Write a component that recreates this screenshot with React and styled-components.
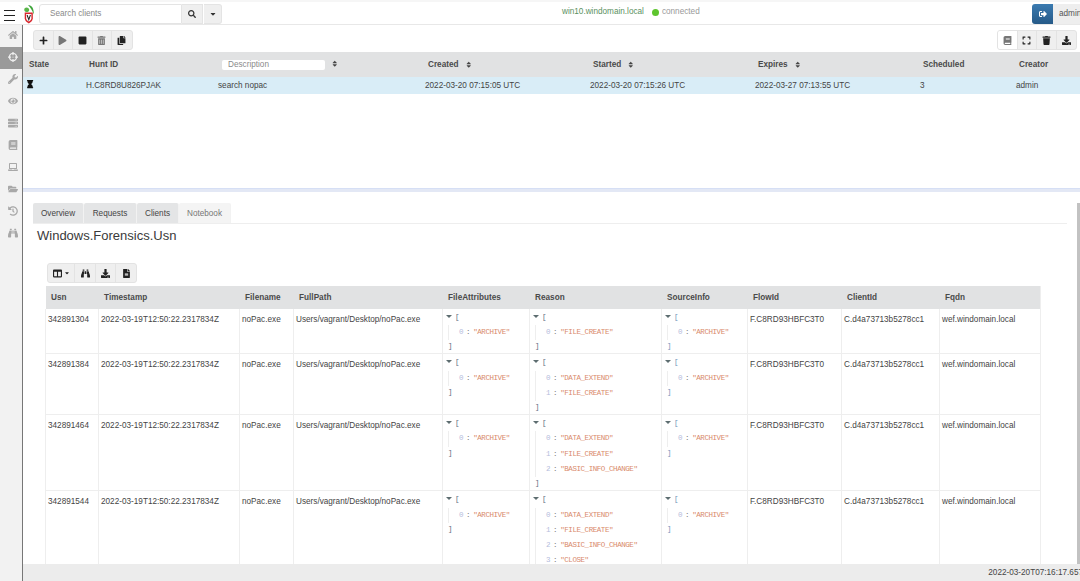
import React from 'react';
import styled, { createGlobalStyle } from 'styled-components';
import {
	FaHome, FaCrosshairs, FaWrench, FaEye, FaServer, FaBook, FaLaptop, FaFolderOpen,
	FaHistory, FaBinoculars, FaPlus, FaPlay, FaStop, FaTrashAlt, FaCopy, FaHourglass,
	FaSearch, FaCaretDown, FaSignOutAlt, FaExpand, FaTrash, FaDownload, FaColumns,
	FaFileAlt, FaSort,
} from 'react-icons/fa';

const GlobalStyle = createGlobalStyle`
	html, body {
		margin: 0;
		padding: 0;
		background: #fff;
		overflow: hidden;
	}
	* {
		box-sizing: border-box;
	}
`;

const Page = styled.div`
	position: relative;
	width: 1080px;
	height: 581px;
	overflow: hidden;
	display: flex;
	flex-direction: column;
	font-family: 'Liberation Sans', Arial, sans-serif;
	font-size: 8.2px;
	color: #333;
`;

const TopBar = styled.div`
	flex: 0 0 25px;
	display: flex;
	align-items: center;
	border-top: 2px solid #f6f6f6;
	border-bottom: 1px solid #e8e8e8;
	position: relative;
	background: #fff;
`;

const Burger = styled.div`
	width: 11px;
	height: 11px;
	margin: 5px 8px 0 4px;
	display: flex;
	flex-direction: column;
	justify-content: space-between;
	span {
		display: block;
		height: 1px;
		background: #222;
	}
`;

const LogoMark = styled.svg`
	flex: none;
	margin-top: 2px;
`;

const SearchGroup = styled.div`
	display: flex;
	height: 20px;
	margin: 1px 0 0 4px;
`;

const SearchInput = styled.div`
	width: 143px;
	border: 1px solid #e4e4e4;
	border-radius: 3px 0 0 3px;
	padding: 0 10px;
	line-height: 18px;
	color: #8a8a8a;
	font-size: 8.2px;
`;

const SearchBtn = styled.div`
	width: ${({ w }) => w}px;
	display: flex;
	align-items: center;
	justify-content: center;
	background: #efefef;
	border: 1px solid #e4e4e4;
	border-left: 0;
	color: #333;
	font-size: 8px;
	&:last-child {
		margin-left: 1px;
		border-radius: 0 3px 3px 0;
	}
`;

const Connection = styled.div`
	position: absolute;
	left: 562px;
	top: 4px;
	display: flex;
	align-items: center;
	font-size: 8.2px;
	line-height: 12px;
	color: #5a9060;
`;

const Dot = styled.span`
	width: 7px;
	height: 7px;
	border-radius: 50%;
	background: #5ec52e;
	margin: 0 3px 0 8px;
`;

const Muted = styled.span`
	color: #999;
`;

const UserGroup = styled.div`
	display: flex;
	height: 20px;
	margin: 1px -10px 0 auto;
`;

const LogoutBtn = styled.div`
	width: 21px;
	display: flex;
	align-items: center;
	justify-content: center;
	color: #fff;
	font-size: 8px;
	background: linear-gradient(#3a7ab0, #265a88);
	border-radius: 3px 0 0 3px;
`;

const UserBtn = styled.div`
	width: 37px;
	padding-left: 6px;
	line-height: 20px;
	background: #eee;
	color: #555;
`;

const Body = styled.div`
	flex: 1;
	min-height: 0;
	display: flex;
`;

const Sidebar = styled.div`
	flex: 0 0 23px;
	background: #f2f2f2;
	border-right: 1px solid #777;
	display: flex;
	flex-direction: column;
`;

const NavItem = styled.div`
	height: 22px;
	padding: 0 0 2px 3px;
	display: flex;
	align-items: center;
	justify-content: center;
	font-size: 10px;
	color: ${({ active }) => (active ? '#eee' : '#a8a8a8')};
	background: ${({ active }) => (active ? '#9a9a9a' : 'transparent')};
`;

const Main = styled.div`
	flex: 1;
	min-width: 0;
	display: flex;
	flex-direction: column;
`;

const TopPane = styled.div`
	flex: 0 0 163px;
`;

const HuntToolbar = styled.div`
	height: 27px;
	padding: 5px 3px 0 10px;
	display: flex;
	justify-content: space-between;
	align-items: flex-start;
`;

const BtnGroup = styled.div`
	display: flex;
	height: 20px;
	border: 1px solid #e3e3e3;
	border-radius: 3px;
	overflow: hidden;
	background: #efefef;
`;

const ToolBtn = styled.div`
	width: ${({ w }) => w || 19.5}px;
	display: flex;
	align-items: center;
	justify-content: center;
	gap: 2px;
	font-size: 9px;
	color: ${({ dim }) => (dim ? '#777' : '#222')};
	background: ${({ light }) => (light ? '#fff' : 'transparent')};
	border-right: 1px solid #e3e3e3;
	&:last-child {
		border-right: 0;
	}
`;

const Table = styled.table`
	border-collapse: collapse;
	table-layout: fixed;
	width: ${({ w }) => w}px;
`;

const HeadCell = styled.th`
	text-align: left;
	font-weight: bold;
	font-size: 8.2px;
	color: #4a4a4a;
	background: #e1e2e3;
	padding: 0 0 0 ${({ pad }) => pad}px;
	height: ${({ h }) => h}px;
	white-space: nowrap;
`;

const SortMark = styled(FaSort)`
	font-size: 7.5px;
	margin-left: 6px;
	color: #444;
	vertical-align: -1px;
`;

const FilterInput = styled.span`
	display: inline-block;
	width: 103px;
	height: 10px;
	line-height: 10px;
	background: #fff;
	border-radius: 2px;
	padding-left: 6px;
	margin-left: 1px;
	font-weight: normal;
	color: #8a8a8a;
	vertical-align: middle;
`;

const HuntCell = styled.td`
	height: 17px;
	padding: 0 0 0 3px;
	background: #d9edf7;
	color: #444;
	white-space: nowrap;
`;

const Splitter = styled.div`
	flex: 0 0 4px;
	background: #e3e8f5;
	border-top: 1px solid #d6dff5;
`;

const LowerPane = styled.div`
	position: relative;
	flex: 1;
	min-height: 0;
	overflow: hidden;
	padding: 11px 0 0 10px;
`;

const ScrollThumb = styled.div`
	position: absolute;
	right: 0;
	top: 11px;
	bottom: 0;
	width: 3px;
	background: #c2c2c2;
`;

const Tabs = styled.div`
	display: flex;
	height: 21px;
	width: 1034px;
	border-bottom: 1px solid #eee;
`;

const Tab = styled.div`
	width: ${({ w }) => w}px;
	height: 20px;
	line-height: 21px;
	text-align: center;
	border-radius: 2px 2px 0 0;
	background: ${({ active }) => (active ? '#f4f4f4' : '#e4e5e6')};
	color: ${({ active }) => (active ? '#777' : '#444')};
	border-right: 1px solid #f2f2f2;
`;

const Title = styled.div`
	margin: 4px 0 0 4px;
	font-size: 13px;
	line-height: 16px;
	color: #3a3a3a;
`;

const ResultTools = styled(BtnGroup)`
	margin: 19px 0 0 14px;
	width: 90px;
`;

const ResultTable = styled(Table)`
	margin: 3px 0 0 12px;
	border-right: 1px solid #eee;
`;

const DataCell = styled.td`
	vertical-align: top;
	padding: ${({ json }) => (json ? '0' : '5px 0 0 2px')};
	border-right: 1px solid #eee;
	border-bottom: 1px solid #eee;
	border-left: 1px solid #eee;
	line-height: 11px;
	color: #444;
	white-space: nowrap;
`;

const Json = styled.div`
	font-family: 'Liberation Mono', 'DejaVu Sans Mono', monospace;
	font-size: 7.5px;
	letter-spacing: -0.43px;
	padding: 0.7px 0 0 3px;
	color: #5d6d80;
`;

const JsonHead = styled.div`
	display: flex;
	align-items: center;
	gap: 3px;
	line-height: 15.5px;
`;

const Bracket = styled.span`
	color: ${({ blue }) => (blue ? '#6f93b8' : '#5d6d80')};
`;

const Caret = styled.span`
	width: 0;
	height: 0;
	border-left: 3px solid transparent;
	border-right: 3px solid transparent;
	border-top: 3px solid #5d6d70;
	margin-bottom: 2px;
`;

const JsonItems = styled.div`
	margin-left: 2px;
	padding-left: 10px;
	line-height: 15.3px;
	border-left: 1px solid #eee;
`;

const JsonIndex = styled.span`
	color: #b4bcdc;
`;

const JsonColon = styled.span`
	color: #777;
	margin: 0 3px;
`;

const JsonValue = styled.span`
	color: #d98a6c;
`;

const JsonClose = styled.div`
	padding-left: 2px;
	line-height: 13px;
	color: ${({ blue }) => (blue ? '#6f93b8' : '#5d6d80')};
`;

const StatusBar = styled.div`
	position: absolute;
	left: 23px;
	right: 0;
	bottom: 0;
	height: 17px;
	background: #ececec;
	display: flex;
	justify-content: flex-end;
	align-items: center;
	overflow: hidden;
	white-space: nowrap;
	color: #444;
`;

const StatusTime = styled.span`
	margin-right: -8px;
`;

const Logo = () => (
	<LogoMark width='12' height='20' viewBox='0 0 12 21'>
		<path d='M5 1 C9 1 11.5 5 11 11 C9.5 7 8 4 5 1Z' fill='#3da53a' />
		<path d='M1 6 C1 3.5 4 3 5.5 4.5 C7 6 6 8 4.5 8.5 C3 8.5 1 8 1 6Z' fill='#58b548' />
		<path d='M1.5 9 L10 9 L10 15 C10 17.5 7.5 19.5 5.8 20.5 C4 19.5 1.5 17.5 1.5 15Z' fill='#d8272d' />
		<path d='M3 10.5 L8.5 10.5 L8.5 15 C8.5 16.5 7 17.8 5.8 18.5 C4.5 17.8 3 16.5 3 15Z' fill='#fff' />
		<path d='M4 11.5 L5.8 16.5 L7.5 11.5' stroke='#222' strokeWidth='1.1' fill='none' />
	</LogoMark>
);

const navIcons = [
	FaHome, FaCrosshairs, FaWrench, FaEye, FaServer, FaBook, FaLaptop, FaFolderOpen,
	FaHistory, FaBinoculars,
];

const huntCols = [60, 132, 207, 165, 165, 165, 96, 67];
const resultCols = [53, 141, 54, 149, 87, 132, 86, 94, 98, 101];
const resultHeads = ['Usn', 'Timestamp', 'Filename', 'FullPath', 'FileAttributes', 'Reason', 'SourceInfo', 'FlowId', 'ClientId', 'Fqdn'];

const rows = [
	{ usn: '342891304', reason: ['FILE_CREATE'] },
	{ usn: '342891384', reason: ['DATA_EXTEND', 'FILE_CREATE'] },
	{ usn: '342891464', reason: ['DATA_EXTEND', 'FILE_CREATE', 'BASIC_INFO_CHANGE'] },
	{ usn: '342891544', reason: ['DATA_EXTEND', 'FILE_CREATE', 'BASIC_INFO_CHANGE', 'CLOSE'] },
];

const JsonList = ({ items, blue }) => (
	<Json>
		<JsonHead>
			<Caret />
			<Bracket blue={blue}>[</Bracket>
		</JsonHead>
		<JsonItems>
			{items.map((v, i) => (
				<div key={i}>
					<JsonIndex>{i}</JsonIndex>
					<JsonColon>:</JsonColon>
					<JsonValue>"{v}"</JsonValue>
				</div>
			))}
		</JsonItems>
		<JsonClose blue={blue}>]</JsonClose>
	</Json>
);

const Cols = ({ widths }) => (
	<colgroup>
		{widths.map((w, i) => (
			<col key={i} style={{ width: w }} />
		))}
	</colgroup>
);

export default function App() {
	return (
		<Page>
			<GlobalStyle />
			<TopBar>
				<Burger>
					<span />
					<span />
					<span />
				</Burger>
				<Logo />
				<SearchGroup>
					<SearchInput>Search clients</SearchInput>
					<SearchBtn w={21}><FaSearch /></SearchBtn>
					<SearchBtn w={18}><FaCaretDown /></SearchBtn>
				</SearchGroup>
				<Connection>
					win10.windomain.local
					<Dot />
					<Muted>connected</Muted>
				</Connection>
				<UserGroup>
					<LogoutBtn><FaSignOutAlt /></LogoutBtn>
					<UserBtn>admin</UserBtn>
				</UserGroup>
			</TopBar>
			<Body>
				<Sidebar>
					{navIcons.map((Icon, i) => (
						<NavItem key={i} active={i === 1}>
							<Icon />
						</NavItem>
					))}
				</Sidebar>
				<Main>
					<TopPane>
						<HuntToolbar>
							<BtnGroup>
								<ToolBtn><FaPlus /></ToolBtn>
								<ToolBtn dim><FaPlay /></ToolBtn>
								<ToolBtn><FaStop /></ToolBtn>
								<ToolBtn dim><FaTrashAlt /></ToolBtn>
								<ToolBtn><FaCopy /></ToolBtn>
							</BtnGroup>
							<BtnGroup>
								<ToolBtn light dim><FaBook /></ToolBtn>
								<ToolBtn><FaExpand /></ToolBtn>
								<ToolBtn><FaTrash /></ToolBtn>
								<ToolBtn><FaDownload /></ToolBtn>
							</BtnGroup>
						</HuntToolbar>
						<Table w={1057}>
							<Cols widths={huntCols} />
							<thead>
								<tr>
									<HeadCell h={25} pad={6}>State</HeadCell>
									<HeadCell h={25} pad={6}>Hunt ID</HeadCell>
									<HeadCell h={25} pad={6}>
										<FilterInput>Description</FilterInput>
										<SortMark />
									</HeadCell>
									<HeadCell h={25} pad={6}>Created<SortMark /></HeadCell>
									<HeadCell h={25} pad={6}>Started<SortMark /></HeadCell>
									<HeadCell h={25} pad={6}>Expires<SortMark /></HeadCell>
									<HeadCell h={25} pad={6}>Scheduled</HeadCell>
									<HeadCell h={25} pad={6}>Creator</HeadCell>
								</tr>
							</thead>
							<tbody>
								<tr>
									<HuntCell><FaHourglass color='#111' /></HuntCell>
									<HuntCell>H.C8RD8U826PJAK</HuntCell>
									<HuntCell>search nopac</HuntCell>
									<HuntCell>2022-03-20 07:15:05 UTC</HuntCell>
									<HuntCell>2022-03-20 07:15:26 UTC</HuntCell>
									<HuntCell>2022-03-27 07:13:55 UTC</HuntCell>
									<HuntCell>3</HuntCell>
									<HuntCell>admin</HuntCell>
								</tr>
							</tbody>
						</Table>
					</TopPane>
					<Splitter />
					<LowerPane>
						<ScrollThumb />
						<Tabs>
							<Tab w={51}>Overview</Tab>
							<Tab w={53}>Requests</Tab>
							<Tab w={42}>Clients</Tab>
							<Tab w={52} active>Notebook</Tab>
						</Tabs>
						<Title>Windows.Forensics.Usn</Title>
						<ResultTools>
							<ToolBtn w={28}><FaColumns /><FaCaretDown size={6} /></ToolBtn>
							<ToolBtn w={21}><FaBinoculars /></ToolBtn>
							<ToolBtn w={21}><FaDownload /></ToolBtn>
							<ToolBtn w={20}><FaFileAlt /></ToolBtn>
						</ResultTools>
						<ResultTable w={995}>
							<Cols widths={resultCols} />
							<thead>
								<tr>
									{resultHeads.map((h) => (
										<HeadCell key={h} h={23} pad={5.6}>{h}</HeadCell>
									))}
								</tr>
							</thead>
							<tbody>
								{rows.map((r) => (
									<tr key={r.usn}>
										<DataCell>{r.usn}</DataCell>
										<DataCell>2022-03-19T12:50:22.2317834Z</DataCell>
										<DataCell>noPac.exe</DataCell>
										<DataCell>Users/vagrant/Desktop/noPac.exe</DataCell>
										<DataCell json><JsonList items={['ARCHIVE']} /></DataCell>
										<DataCell json><JsonList items={r.reason} /></DataCell>
										<DataCell json><JsonList items={['ARCHIVE']} blue /></DataCell>
										<DataCell>F.C8RD93HBFC3T0</DataCell>
										<DataCell>C.d4a73713b5278cc1</DataCell>
										<DataCell>wef.windomain.local</DataCell>
									</tr>
								))}
							</tbody>
						</ResultTable>
					</LowerPane>
				</Main>
			</Body>
			<StatusBar>
				<StatusTime>2022-03-20T07:16:17.657Z</StatusTime>
			</StatusBar>
		</Page>
	);
}
